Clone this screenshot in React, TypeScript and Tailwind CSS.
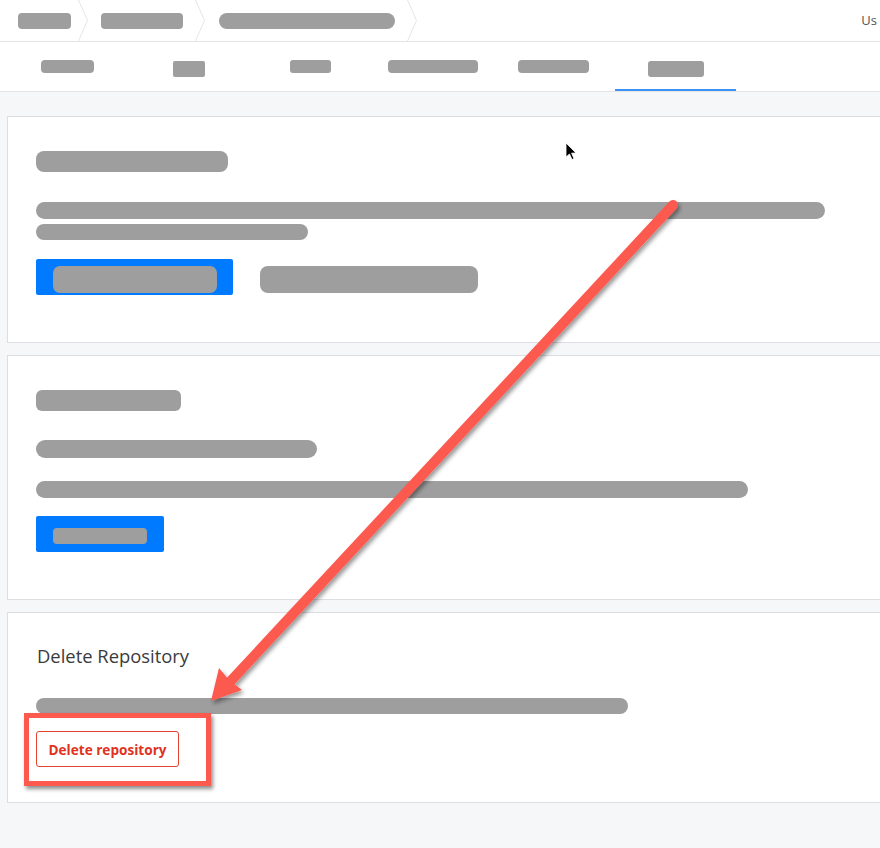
const pill = "bg-[#9e9e9f]";

function Chevron() {
  return (
    <svg width="11" height="41" viewBox="0 0 11 41" className="shrink-0">
      <polyline points="0.5,0 9.5,20.5 0.5,41" fill="none" stroke="#e3e5e8" strokeWidth="1" />
    </svg>
  );
}

function Header() {
  return (
    <div className="flex h-[42px] items-center border-b border-[#e3e5e8] bg-white">
      <div className={`ml-[18px] h-[16px] w-[53px] rounded-[4px] ${pill}`} />
      <div className="ml-[7px]"><Chevron /></div>
      <div className={`ml-[12px] h-[16px] w-[82px] rounded-[4px] ${pill}`} />
      <div className="ml-[12px]"><Chevron /></div>
      <div className={`ml-[13px] h-[16px] w-[176px] rounded-full ${pill}`} />
      <div className="ml-[12px]"><Chevron /></div>
      <div className="ml-auto mr-[3px] whitespace-nowrap text-[13px] text-[#555] font-['Open_Sans',sans-serif]">
        Us
      </div>
    </div>
  );
}

function Tabs() {
  return (
    <div className="relative flex h-[50px] items-start border-b border-[#e3e5e8] bg-white">
      <div className={`ml-[41px] mt-[18px] h-[13px] w-[53px] rounded-[4px] ${pill}`} />
      <div className={`ml-[79px] mt-[19px] h-[16px] w-[32px] rounded-[2px] ${pill}`} />
      <div className={`ml-[85px] mt-[18px] h-[13px] w-[41px] rounded-[3px] ${pill}`} />
      <div className={`ml-[57px] mt-[18px] h-[13px] w-[90px] rounded-[4px] ${pill}`} />
      <div className={`ml-[40px] mt-[18px] h-[13px] w-[71px] rounded-[4px] ${pill}`} />
      <div className="ml-[26px] flex h-[49px] w-[121px] justify-center border-b-[2px] border-[#3d93f5]">
        <div className={`mt-[19px] h-[16px] w-[56px] rounded-[3px] ${pill}`} />
      </div>
    </div>
  );
}

function Card(props: { h: string; children: React.ReactNode }) {
  return (
    <div className={`${props.h} border border-r-0 border-[#dcdee2] bg-white pl-[28px] pt-[34px]`}>
      {props.children}
    </div>
  );
}

export default function App() {
  return (
    <div className="relative h-[848px] w-[880px] overflow-hidden bg-[#f6f7f9] font-['Open_Sans',sans-serif]">
      <Header />
      <Tabs />

      <div className="flex flex-col gap-[12px] pl-[7px] pt-[24px]">
        <Card h="h-[227px]">
          <div className={`h-[21px] w-[192px] rounded-[8px] ${pill}`} />
          <div className={`mt-[30px] h-[17px] w-[789px] rounded-full ${pill}`} />
          <div className={`mt-[5px] h-[16px] w-[272px] rounded-full ${pill}`} />
          <div className="mt-[19px] flex items-start">
            <div className="flex h-[36px] w-[197px] items-start rounded-[2px] bg-[#007bff] pl-[17px] pt-[7px]">
              <div className={`h-[27px] w-[164px] rounded-[7px] ${pill}`} />
            </div>
            <div className={`ml-[27px] mt-[7px] h-[27px] w-[218px] rounded-[8px] ${pill}`} />
          </div>
        </Card>

        <Card h="h-[245px]">
          <div className={`h-[21px] w-[145px] rounded-[6px] ${pill}`} />
          <div className={`mt-[29px] h-[18px] w-[281px] rounded-full ${pill}`} />
          <div className={`mt-[23px] h-[17px] w-[712px] rounded-full ${pill}`} />
          <div className="mt-[18px] flex h-[36px] w-[128px] items-start rounded-[2px] bg-[#007bff] pl-[17px] pt-[12px]">
            <div className={`h-[16px] w-[94px] rounded-[4px] ${pill}`} />
          </div>
        </Card>

        <Card h="h-[191px]">
          <div className="-mt-[3px] pl-[1px] text-[18.4px] leading-[24px] text-[#3a3b3c]">Delete Repository</div>
          <div className={`mt-[30px] h-[16px] w-[592px] rounded-full ${pill}`} />
          <button className="mt-[17px] flex h-[36px] w-[143px] items-center justify-center rounded-[3px] border border-[#e5432f] bg-white pt-[3px] text-[13.6px] font-bold text-[#e0321f]">
            Delete repository
          </button>
        </Card>
      </div>

      {/* annotation box */}
      <div className="pointer-events-none absolute left-[24px] top-[713px] h-[73px] w-[187px] border-[5px] border-[#fd5a4f] shadow-[2px_3px_4px_rgba(0,0,0,0.45)]" />

      {/* annotation arrow */}
      <svg className="pointer-events-none absolute left-0 top-0" width="880" height="848" viewBox="0 0 880 848">
        <defs>
          <filter id="sh" x="-10%" y="-10%" width="130%" height="130%">
            <feDropShadow dx="2" dy="3" stdDeviation="2" floodColor="#000" floodOpacity="0.4" />
          </filter>
        </defs>
        <g filter="url(#sh)">
          <line x1="673" y1="205" x2="228" y2="684" stroke="#fd5a4f" strokeWidth="10" strokeLinecap="round" />
          <polygon points="211,701 219,668 229,680 242,690" fill="#fd5a4f" />
        </g>
        {/* mouse cursor */}
        <path d="M566 143 L566 157 L569.5 154 L572 159.5 L574 158.6 L571.6 153.2 L576 153 Z" fill="#000" stroke="#fff" strokeWidth="0.8" />
      </svg>
    </div>
  );
}
